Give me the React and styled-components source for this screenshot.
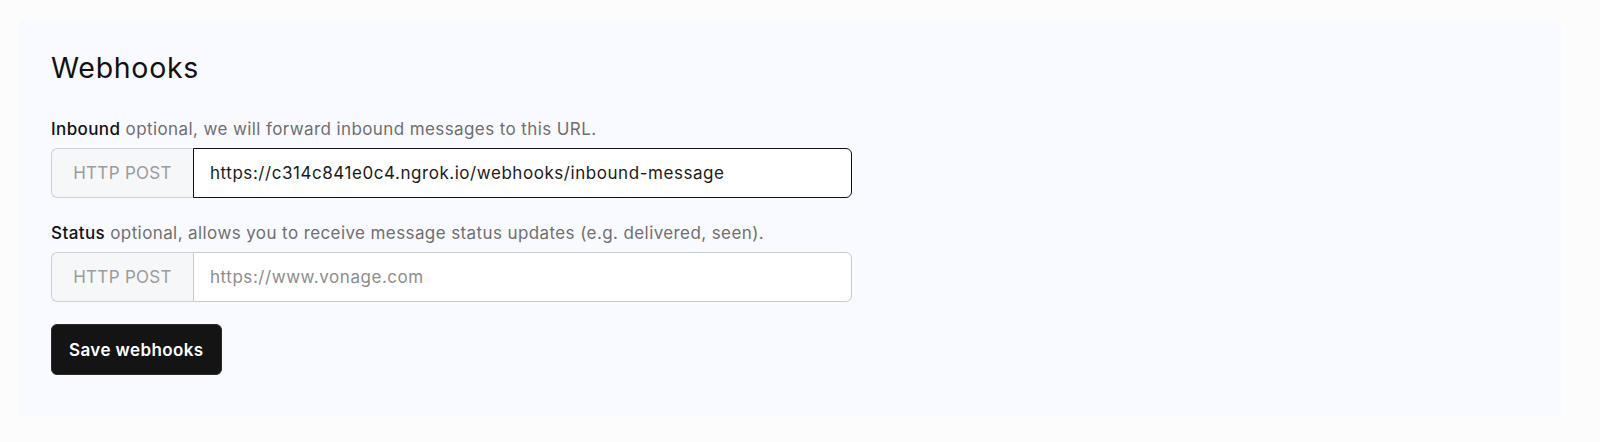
import React from 'react';
import styled, { createGlobalStyle } from 'styled-components';

const GlobalStyle = createGlobalStyle`
    body {
        margin: 0;
        background: #fcfcfc;
        font-family: Inter, "Noto Sans", sans-serif;
        color: #111111;
    }
`;

const Page = styled.div`
    padding: 20px 39px 26px 19px;
`;

const Panel = styled.section`
    background: #f9faff;
    padding: 31px 32px 41px;
    height: 396px;
    box-sizing: border-box;
`;

const Title = styled.h2`
    margin: 0 0 33px;
    font-size: 28.5px;
    line-height: 34px;
    font-weight: 400;
    letter-spacing: 0.7px;
`;

const Field = styled.div`
    display: flex;
    flex-direction: column;
    gap: 8px;
    margin-bottom: 24px;
`;

const Label = styled.label`
    font-size: 17px;
    line-height: 22px;
    letter-spacing: 0.4px;
    color: #6f6f6f;

    strong {
        font-weight: 500;
        color: #111111;
    }
`;

const InputGroup = styled.div`
    display: flex;
    width: 801px;
    height: 50px;
    box-sizing: border-box;
`;

const Addon = styled.span`
    flex: 0 0 142px;
    box-sizing: border-box;
    display: flex;
    align-items: center;
    justify-content: center;
    background: #f6f7f9;
    border: 1px solid #cdd1d6;
    border-right: none;
    border-radius: 6px 0 0 6px;
    color: #9b9b9b;
    font-size: 17px;
    letter-spacing: 0.3px;
`;

const Input = styled.input`
    flex: 1;
    min-width: 0;
    box-sizing: border-box;
    border: 1px solid ${p => (p.$focused ? '#111111' : '#c6c9cf')};
    border-radius: 0 6px 6px 0;
    background: #ffffff;
    padding: 0 16px;
    font-family: inherit;
    font-size: 17px;
    letter-spacing: 0.55px;
    color: #1a1a1a;
    outline: none;

    &::placeholder {
        color: #8c8c8c;
    }
`;

const SaveButton = styled.button`
    margin-top: -2px;
    height: 51px;
    padding: 0 17px;
    background: #141414;
    color: #ffffff;
    border: 1px solid #2a2a2a;
    border-radius: 6px;
    font-family: inherit;
    font-size: 17px;
    letter-spacing: 0.4px;
    font-weight: 600;
    cursor: pointer;
`;

export default function App() {
    return (
        <Page>
            <GlobalStyle />
            <Panel>
                <Title>Webhooks</Title>
                <Field>
                    <Label>
                        <strong>Inbound</strong> optional, we will forward inbound messages to this URL.
                    </Label>
                    <InputGroup>
                        <Addon>HTTP POST</Addon>
                        <Input
                            $focused
                            defaultValue="https://c314c841e0c4.ngrok.io/webhooks/inbound-message"
                        />
                    </InputGroup>
                </Field>
                <Field>
                    <Label>
                        <strong>Status</strong> optional, allows you to receive message status updates (e.g. delivered, seen).
                    </Label>
                    <InputGroup>
                        <Addon>HTTP POST</Addon>
                        <Input placeholder="https://www.vonage.com" />
                    </InputGroup>
                </Field>
                <SaveButton>Save webhooks</SaveButton>
            </Panel>
        </Page>
    );
}
